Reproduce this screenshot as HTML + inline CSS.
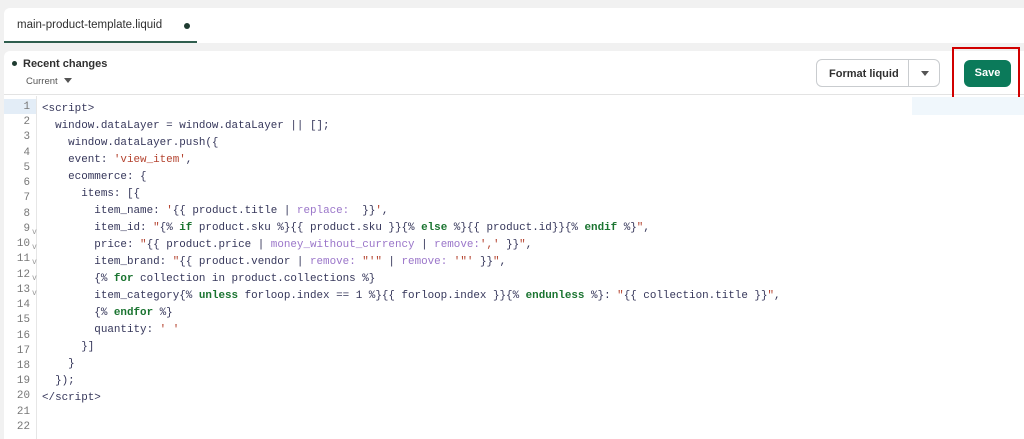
<!DOCTYPE html>
<html><head><meta charset="utf-8"><style>
*{margin:0;padding:0;box-sizing:border-box}
body{width:1024px;height:439px;background:#f1f1f1;font-family:"Liberation Sans",sans-serif;position:relative;overflow:hidden}
.tabbar{position:absolute;left:4px;top:8px;width:1020px;height:35px;background:#fff;border-radius:6px 0 0 0}
.tab{position:absolute;left:0;top:0;width:193px;height:35px;border-bottom:2px solid #2f5e4e;font-size:11.5px;color:#303030;padding:11px 0 0 13px}
.tab .dot{position:absolute;left:180px;top:15px;width:6px;height:6px;border-radius:50%;background:#1f3b30}
.panel{position:absolute;left:4px;top:51px;width:1020px;height:388px;background:#fff;border-radius:6px 0 0 0}
.hdr{position:absolute;left:0;top:0;width:1020px;height:44px;border-bottom:1px solid #e3e3e3}
.rc{position:absolute;left:8px;top:7px;font-size:11px;font-weight:bold;color:#303030}
.rc:before{content:"";display:inline-block;width:5px;height:5px;border-radius:50%;background:#1f3b30;margin-right:6px;vertical-align:1px}
.cur{position:absolute;left:22px;top:25px;font-size:9.5px;color:#555}
.cur:after{content:"";display:inline-block;border:4px solid transparent;border-top:5px solid #555;margin-left:6px;vertical-align:-3px}
.fmt{position:absolute;left:812px;top:8px;width:124px;height:28px;border:1px solid #c9cccf;border-radius:6px;font-size:11px;font-weight:bold;color:#303030}
.fmt span{position:absolute;left:12px;top:8px}
.fmt i{position:absolute;left:91px;top:0;height:26px;border-left:1px solid #c9cccf;width:32px}
.fmt i:after{content:"";position:absolute;left:12px;top:11px;border:4px solid transparent;border-top:5px solid #555}
.save{position:absolute;left:960px;top:9px;width:47px;height:27px;background:#0b7a5a;border-radius:6px;color:#fff;font-size:11px;font-weight:bold;text-align:center;line-height:27px}
.red{position:absolute;left:948px;top:-4px;width:68px;height:52px;border:2px solid #d10000}
.gut{position:absolute;left:0;top:45px;width:33px;height:343px;border-right:1px solid #e6e6e6}
.hl{position:absolute;left:0;top:48px;width:32px;height:15px;background:#e3edf7}
.hl2{position:absolute;left:908px;top:46px;width:112px;height:18px;background:#f0f7fc}
.nums{position:absolute;left:0;top:49px;width:26px;text-align:right;font-family:"Liberation Mono",monospace;font-size:10.9px;line-height:15.24px;color:#777}
.nums div{position:relative}
.nums b{position:absolute;left:28px;top:3px;font-weight:normal;font-size:8px;color:#999}
.code{position:absolute;left:38px;top:50px;font-family:"Liberation Mono",monospace;font-size:10.9px;line-height:17px;color:#35365a;white-space:pre}
.p{color:#9a75c9}.k{color:#1a7430;font-weight:bold}.s{color:#b4432f}
</style></head><body>
<div class="tabbar"><div class="tab">main-product-template.liquid<span class="dot"></span></div></div>
<div class="panel">
<div class="hdr">
<div class="rc">Recent changes</div><div class="cur">Current</div>
<div class="fmt"><span>Format liquid</span><i></i></div>
<div class="save">Save</div><div class="red"></div>
</div>
<div class="gut"></div><div class="hl"></div><div class="hl2"></div>
<div class="nums"><div>1</div><div>2</div><div>3</div><div>4</div><div>5</div><div>6</div><div>7</div><div>8</div><div>9<b>v</b></div><div>10<b>v</b></div><div>11<b>v</b></div><div>12<b>v</b></div><div>13<b>v</b></div><div>14</div><div>15</div><div>16</div><div>17</div><div>18</div><div>19</div><div>20</div><div>21</div><div>22</div></div>
<div class="code">&lt;script&gt;
  window.dataLayer = window.dataLayer || [];
    window.dataLayer.push({
    event: <span class="s">'view_item'</span>,
    ecommerce: {
      items: [{
        item_name: <span class="s">'</span>{{ product.title | <span class="p">replace:</span>  }}<span class="s">'</span>,
        item_id: <span class="s">"</span>{% <span class="k">if</span> product.sku %}{{ product.sku }}{% <span class="k">else</span> %}{{ product.id}}{% <span class="k">endif</span> %}<span class="s">"</span>,
        price: <span class="s">"</span>{{ product.price | <span class="p">money_without_currency</span> | <span class="p">remove:</span><span class="s">','</span> }}<span class="s">"</span>,
        item_brand: <span class="s">"</span>{{ product.vendor | <span class="p">remove:</span> <span class="s">"'"</span> | <span class="p">remove:</span> <span class="s">'"'</span> }}<span class="s">"</span>,
        {% <span class="k">for</span> collection in product.collections %}
        item_category{% <span class="k">unless</span> forloop.index == 1 %}{{ forloop.index }}{% <span class="k">endunless</span> %}: <span class="s">"</span>{{ collection.title }}<span class="s">"</span>,
        {% <span class="k">endfor</span> %}
        quantity: <span class="s">' '</span>
      }]
    }
  });
&lt;/script&gt;</div>
</div>
</body></html>
